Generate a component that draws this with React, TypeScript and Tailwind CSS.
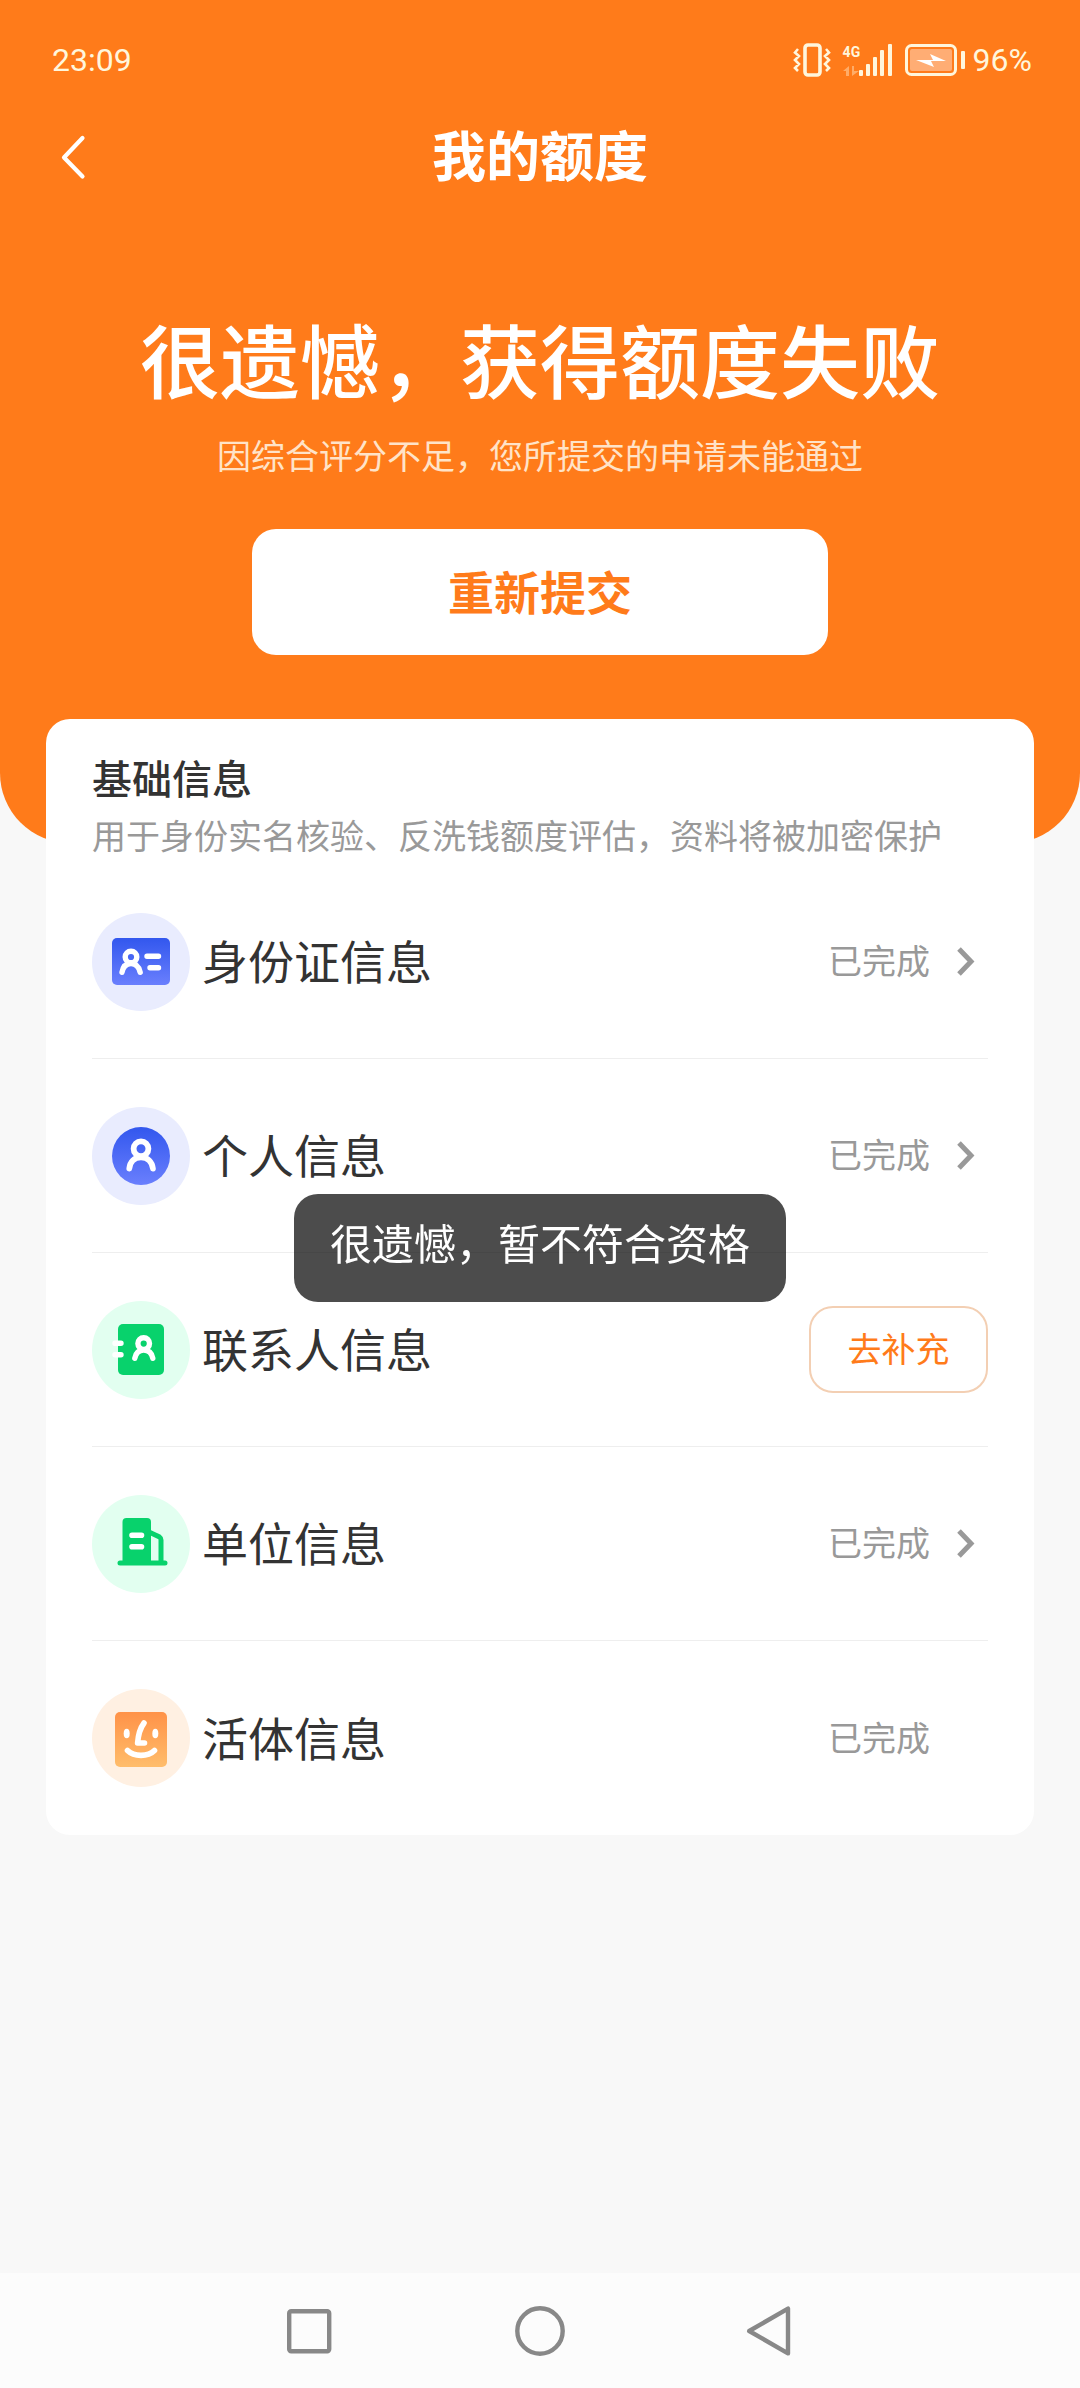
import type { ReactNode } from "react";

type InfoItem = {
  id: string;
  label: string;
  icon: ReactNode;
  status: "done" | "todo";
  link: boolean;
};

function IdCardIcon() {
  return (
    <svg viewBox="0 0 98 98" className="size-[98px] shrink-0" fill="none" aria-hidden="true">
      <defs>
        <linearGradient id="idCard" x1="0" y1="0" x2="0" y2="1">
          <stop offset="0" stopColor="#3257ee" />
          <stop offset="1" stopColor="#6a7ffd" />
        </linearGradient>
      </defs>
      <circle cx="49" cy="49" r="49" fill="#e9ecfe" />
      <rect x="20" y="25" width="58" height="47" rx="5" fill="url(#idCard)" />
      <g stroke="#fff" strokeWidth="5.4" strokeLinecap="round">
        <circle cx="39" cy="44" r="5.8" />
        <path d="M30 59.3C31 54 34 50.5 39 50.5S47 54 48.2 59.3" />
        <path d="M55 43.3H66.5M58 54.7H66.5" />
      </g>
    </svg>
  );
}

function PersonIcon() {
  return (
    <svg viewBox="0 0 98 98" className="size-[98px] shrink-0" fill="none" aria-hidden="true">
      <defs>
        <linearGradient id="person" x1="0" y1="0" x2="0" y2="1">
          <stop offset="0" stopColor="#3257ee" />
          <stop offset="1" stopColor="#6a7ffd" />
        </linearGradient>
      </defs>
      <circle cx="49" cy="49" r="49" fill="#e9ecfe" />
      <circle cx="49" cy="49" r="29" fill="url(#person)" />
      <g stroke="#fff" strokeWidth="5.8" strokeLinecap="round">
        <circle cx="49" cy="41.7" r="7.4" />
        <path d="M37.3 61.5C38 54.5 42.5 50.3 49 50.3S60 54.5 60.9 61.5" />
      </g>
    </svg>
  );
}

function ContactIcon() {
  return (
    <svg viewBox="0 0 98 98" className="size-[98px] shrink-0" fill="none" aria-hidden="true">
      <circle cx="49" cy="49" r="49" fill="#e2fff0" />
      <rect x="26" y="23" width="46" height="51" rx="5" fill="#08d26c" />
      <g stroke="#fff" strokeWidth="5.4" strokeLinecap="round">
        <path d="M23 42.3H29M23 53.7H29" />
        <circle cx="51.7" cy="42.6" r="5.8" />
        <path d="M42.8 57.3C43.8 52 47 49 51.7 49S59.8 52 60.8 57.3" />
      </g>
    </svg>
  );
}

function CompanyIcon() {
  return (
    <svg viewBox="0 0 98 98" className="size-[98px] shrink-0" fill="none" aria-hidden="true">
      <circle cx="49" cy="49" r="49" fill="#e2fff0" />
      <rect x="30.5" y="23" width="28.5" height="47" rx="4" fill="#08d26c" />
      <path
        d="M28 68H73M58 37.5L67.5 42Q69 43 69 45V68"
        stroke="#08d26c"
        strokeWidth="5"
        strokeLinecap="round"
      />
      <path d="M40 40.3H49.5M40 51.7H49.5" stroke="#fff" strokeWidth="5.6" strokeLinecap="round" />
    </svg>
  );
}

function FaceIcon() {
  return (
    <svg viewBox="0 0 98 98" className="size-[98px] shrink-0" fill="none" aria-hidden="true">
      <defs>
        <linearGradient id="face" x1="0" y1="0" x2="0" y2="1">
          <stop offset="0" stopColor="#ff9248" />
          <stop offset="1" stopColor="#ffbd6b" />
        </linearGradient>
      </defs>
      <circle cx="49" cy="49" r="49" fill="#fff0e2" />
      <rect x="23" y="23" width="52" height="55" rx="5" fill="url(#face)" />
      <ellipse cx="34.7" cy="44.5" rx="3" ry="4.8" fill="#fff" />
      <ellipse cx="63.3" cy="44.5" rx="3" ry="4.8" fill="#fff" />
      <g stroke="#fff" strokeWidth="5.6" strokeLinecap="round" strokeLinejoin="round">
        <path d="M52 34C49 38 46.3 45 45.6 54H52.5" />
        <path d="M35.5 61.5C42 68 56 68 62.5 61.5" />
      </g>
    </svg>
  );
}

const ITEMS: InfoItem[] = [
  { id: "idcard", label: "身份证信息", icon: <IdCardIcon />, status: "done", link: true },
  { id: "personal", label: "个人信息", icon: <PersonIcon />, status: "done", link: true },
  { id: "contact", label: "联系人信息", icon: <ContactIcon />, status: "todo", link: false },
  { id: "company", label: "单位信息", icon: <CompanyIcon />, status: "done", link: true },
  { id: "face", label: "活体信息", icon: <FaceIcon />, status: "done", link: false },
];

function StatusBar() {
  return (
    <div className="flex h-[120px] items-center justify-between pr-12 pl-[52px] font-[Roboto,sans-serif] text-[32px] leading-none text-[#fff6dc]">
      <span>23:09</span>
      <div className="flex items-center">
        <svg viewBox="0 0 38 34" className="h-[34px] w-[38px]" fill="none" stroke="currentColor" aria-hidden="true">
          <rect x="12" y="2" width="15" height="30" rx="3" strokeWidth="3.6" />
          <path d="M5 6L2 9.5L6 13L2 17L6 21L2 25L5 28M33 6L36 9.5L32 13L36 17L32 21L36 25L33 28" strokeWidth="2.6" />
        </svg>
        <div className="ml-3 flex h-8 w-4 flex-col justify-between">
          <span className="text-[14px] leading-4 font-bold">4G</span>
          <svg viewBox="0 0 16 10" className="h-[10px] w-4 opacity-40" fill="currentColor" aria-hidden="true">
            <path d="M0 5L6 0V10H3V5ZM9 0H11V5H16L9 10Z" />
          </svg>
        </div>
        <svg viewBox="0 0 34 32" className="h-8 w-[34px]" fill="currentColor" aria-hidden="true">
          <rect x="0" y="26" width="4" height="6" rx="1" />
          <rect x="7" y="20" width="4" height="12" rx="1" />
          <rect x="14" y="13" width="4" height="19" rx="1" />
          <rect x="21" y="6" width="4" height="26" rx="1" />
          <rect x="29" y="0" width="4" height="32" rx="1" />
        </svg>
        <svg viewBox="0 0 60 34" className="ml-3 h-[34px] w-[60px]" fill="none" aria-hidden="true">
          <rect x="1.5" y="2.5" width="49" height="29" rx="5" stroke="currentColor" strokeWidth="3" />
          <rect x="5" y="6" width="42" height="22" rx="2" fill="#ffad74" />
          <path d="M11 17L28 17L25 11L41 18H26L29 24Z" fill="#fff" />
          <rect x="56" y="8" width="4" height="18" rx="1" fill="currentColor" />
        </svg>
        <span className="ml-2">96%</span>
      </div>
    </div>
  );
}

function InfoRow({ item }: { item: InfoItem }) {
  return (
    <li className="flex h-[194px] items-center border-b border-[#eeeeee] last:border-b-0">
      {item.icon}
      <span className="ml-3 flex-1 pb-1 text-[46px] text-[#333333]">{item.label}</span>
      {item.status === "todo" ? (
        <button
          type="button"
          className="h-[87px] w-[179px] rounded-3xl border-2 border-[#f3cfb3] pb-1 text-[34px] text-[#ff7b1a]"
        >
          去补充
        </button>
      ) : (
        <>
          <span className="pb-1 text-[34px] text-[#999999]">已完成</span>
          {item.link ? (
            <button type="button" aria-label={item.label} className="ml-[18px] flex size-10 items-center justify-center">
              <svg viewBox="0 0 40 40" className="size-10" fill="none" aria-hidden="true">
                <path d="M11 7L23 19.5L11 32" stroke="#999999" strokeWidth="5" />
              </svg>
            </button>
          ) : (
            <span className="ml-[18px] w-10" />
          )}
        </>
      )}
    </li>
  );
}

function SystemNav() {
  return (
    <nav className="flex h-[115px] items-center justify-center gap-[180px] bg-[#fcfcfc]">
      <button type="button" aria-label="最近任务">
        <svg viewBox="0 0 50 50" className="size-[50px]" fill="none" stroke="#888888" strokeWidth="4.4" aria-hidden="true">
          <rect x="4.2" y="5.2" width="40" height="40" rx="2" />
        </svg>
      </button>
      <button type="button" aria-label="主屏幕">
        <svg viewBox="0 0 50 50" className="size-[50px]" fill="none" stroke="#888888" strokeWidth="4.4" aria-hidden="true">
          <circle cx="25" cy="25" r="22.7" />
        </svg>
      </button>
      <button type="button" aria-label="返回上一级">
        <svg viewBox="0 0 50 50" className="size-[50px]" fill="none" stroke="#888888" strokeWidth="4.4" strokeLinejoin="round" aria-hidden="true">
          <path d="M43 2.6V47.4L4.2 25Z" />
        </svg>
      </button>
    </nav>
  );
}

export default function App() {
  return (
    <div className="relative flex min-h-screen flex-col bg-[#f8f8f8] font-['Noto_Sans_CJK_SC',sans-serif]">
      <header className="rounded-b-[70px] bg-[#ff7b1a] pb-[188px] text-white">
        <StatusBar />
        <div className="grid h-[72px] grid-cols-[1fr_auto_1fr] items-center">
          <button type="button" aria-label="返回" className="ml-12 size-12">
            <svg viewBox="0 0 48 48" className="size-12" fill="none" aria-hidden="true">
              <path d="M34.5 6L16 25.5L34.5 44.5" stroke="#fff" strokeWidth="4.2" strokeLinecap="round" strokeLinejoin="round" />
            </svg>
          </button>
          <h1 className="pb-1 text-[54px] leading-[68px] font-bold">我的额度</h1>
        </div>
        <div className="mt-[109px] flex flex-col items-center">
          <h2 className="text-[80px] leading-[112px] font-medium">很遗憾，获得额度失败</h2>
          <p className="mt-[14px] text-[34px] leading-[56px] text-[#ffe3c8]">
            因综合评分不足，您所提交的申请未能通过
          </p>
          <button
            type="button"
            className="mt-[46px] h-[126px] w-[576px] rounded-3xl bg-white pb-1 text-[46px] font-bold text-[#ff7b1a]"
          >
            重新提交
          </button>
        </div>
      </header>

      <main className="flex-1">
        <section className="mx-[46px] -mt-[124px] rounded-3xl bg-white px-[46px] pt-7">
          <h3 className="text-[40px] leading-[60px] font-medium text-[#333333]">基础信息</h3>
          <p className="pb-[2px] text-[34px] leading-[56px] text-[#999999]">
            用于身份实名核验、反洗钱额度评估，资料将被加密保护
          </p>
          <ul>
            {ITEMS.map((item) => (
              <InfoRow key={item.id} item={item} />
            ))}
          </ul>
        </section>
      </main>

      <SystemNav />

      {/* toast */}
      <div className="pointer-events-none fixed inset-0 flex items-center justify-center pt-[108px]">
        <div role="status" className="rounded-3xl bg-black/70 px-9 pt-5 pb-8 text-[42px] leading-[56px] text-white">
          很遗憾，暂不符合资格
        </div>
      </div>
    </div>
  );
}
